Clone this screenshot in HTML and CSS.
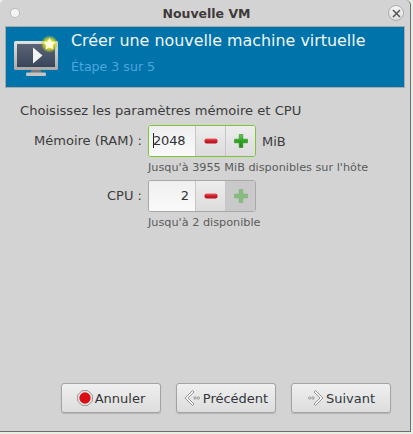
FILE: index.html
```html
<!DOCTYPE html>
<html lang="fr">
<head>
<meta charset="utf-8">
<title>Nouvelle VM</title>
<link rel="stylesheet" href="styles.css">
</head>
<body>
<svg class="defs" width="0" height="0">
  <defs>
    <radialGradient id="glow"><stop offset="0.35" stop-color="#f6f53a"/><stop offset="0.7" stop-color="#c8d32a" stop-opacity=".7"/><stop offset="1" stop-color="#8ab040" stop-opacity="0"/></radialGradient>
    <linearGradient id="scr" x1="0" y1="0" x2="0" y2="1"><stop offset="0" stop-color="#5a6476"/><stop offset="1" stop-color="#39465a"/></linearGradient>
    <linearGradient id="frm" x1="0" y1="0" x2="0" y2="1"><stop offset="0" stop-color="#e2e2e0"/><stop offset="1" stop-color="#a8a8a6"/></linearGradient>
    <linearGradient id="red" x1="0" y1="0" x2="0" y2="1"><stop offset="0" stop-color="#e8616a"/><stop offset=".45" stop-color="#d01f2c"/><stop offset="1" stop-color="#b3121d"/></linearGradient>
    <linearGradient id="grn" x1="0" y1="0" x2="0" y2="1"><stop offset="0" stop-color="#6cc95a"/><stop offset=".5" stop-color="#2fa521"/><stop offset="1" stop-color="#1f8a16"/></linearGradient>
  </defs>
</svg>
<div class="window">
  <header class="titlebar">
    <span class="menu-dot"></span>
    <span class="title">Nouvelle VM</span>
    <span class="close">
      <svg width="9" height="9" viewBox="0 0 9 9"><path d="M1 1l7 7M8 1L1 8" stroke="#555" stroke-width="1.500" fill="none"/></svg>
    </span>
  </header>
  <section class="banner">
    <svg class="vm-icon" width="48" height="44" viewBox="0 0 48 44">
      <rect x="0" y="7" width="44" height="29" rx="1.500" fill="url(#frm)"/>
      <rect x="3" y="10" width="38" height="23" fill="url(#scr)"/>
      <rect x="17" y="36" width="10" height="3" fill="#77797a"/>
      <rect x="12" y="38.500" width="20" height="3.500" rx="1" fill="#c4c4c2"/>
      <path d="M19 13.500 L28.500 21.500 L19 29.500Z" fill="#f4f4f4"/>
      <circle cx="35.500" cy="10" r="9" fill="url(#glow)"/>
      <path d="M35.500 3.800l1.900 4 4.300.5-3.200 2.900.9 4.300-3.900-2.200-3.900 2.200.9-4.300-3.200-2.900 4.300-.5z" fill="#fffbe0"/>
    </svg>
    <div class="banner-text">
      <div class="banner-title">Créer une nouvelle machine virtuelle</div>
      <div class="banner-step">Étape 3 sur 5</div>
    </div>
  </section>
  <main class="content">
    <p class="intro">Choisissez les paramètres mémoire et CPU</p>
    <div class="form">
      <label class="field-label">Mémoire (RAM) :</label>
      <div class="field">
        <div class="spin focused">
          <span class="spin-entry left"><i class="caret"></i>2048</span>
          <span class="spin-btn">
            <svg width="14" height="14" viewBox="0 0 14 14"><rect x=".5" y="4.500" width="13" height="5" rx="2" fill="url(#red)"/></svg>
          </span>
          <span class="spin-btn">
            <svg width="16" height="16" viewBox="0 0 16 16"><path d="M6.200 1.500h3.600v4.700h4.700v3.600H9.800v4.700H6.200V9.800H1.500V6.200h4.700z" fill="url(#grn)" stroke="#2a8f1e" stroke-width=".6" stroke-linejoin="round"/></svg>
          </span>
        </div>
        <span class="unit">MiB</span>
      </div>
      <div class="hint">Jusqu'à 3955 MiB disponibles sur l'hôte</div>
      <label class="field-label">CPU :</label>
      <div class="field">
        <div class="spin">
          <span class="spin-entry">2</span>
          <span class="spin-btn">
            <svg width="14" height="14" viewBox="0 0 14 14"><rect x=".5" y="4.500" width="13" height="5" rx="2" fill="url(#red)"/></svg>
          </span>
          <span class="spin-btn disabled">
            <svg width="16" height="16" viewBox="0 0 16 16"><path d="M6.200 1.500h3.600v4.700h4.700v3.600H9.800v4.700H6.200V9.800H1.500V6.200h4.700z" fill="#86bd7e" stroke="#78ad70" stroke-width=".6" stroke-linejoin="round"/></svg>
          </span>
        </div>
      </div>
      <div class="hint">Jusqu'à 2 disponible</div>
    </div>
  </main>
  <footer class="actions">
    <button class="btn" type="button">
      <svg width="16" height="16" viewBox="0 0 16 16"><path d="M5 .7h6L15.300 5v6L11 15.300H5L.7 11V5z" fill="#efefef" stroke="#8f8f8f"/><circle cx="8" cy="8" r="5.700" fill="#d90f14"/></svg>
      Annuler
    </button>
    <button class="btn" type="button">
      <svg width="17" height="18" viewBox="0 0 17 18"><path d="M8.500 1.500L1 9l7.500 7.500 1.500-1.500L4 9l6-6z" fill="#f4f4f4" stroke="#8c8c8c" stroke-width=".9" stroke-linejoin="round"/><circle cx="11" cy="9" r="1.200" fill="none" stroke="#8c8c8c" stroke-width=".8"/><circle cx="14.300" cy="9" r="1.200" fill="none" stroke="#8c8c8c" stroke-width=".8"/></svg>
      Précédent
    </button>
    <button class="btn" type="button">
      <svg width="17" height="18" viewBox="0 0 17 18"><path d="M8.500 1.500L16 9l-7.500 7.500L7 15l6-6-6-6z" fill="#f4f4f4" stroke="#8c8c8c" stroke-width=".9" stroke-linejoin="round"/><circle cx="6" cy="9" r="1.200" fill="none" stroke="#8c8c8c" stroke-width=".8"/><circle cx="2.700" cy="9" r="1.200" fill="none" stroke="#8c8c8c" stroke-width=".8"/></svg>
      Suivant
    </button>
  </footer>
</div>
</body>
</html>
```

FILE: styles.css
```css
* { box-sizing: border-box; }
html, body { margin: 0; padding: 0; height: 100%; background: #e9eee4; overflow: hidden; }
body { font-family: "DejaVu Sans", sans-serif; font-size: 13px; color: #3c3c3c; }
.defs { display: block; height: 0; }

.window {
  width: 411px;
  height: 432px;
  background: #d3d3d3;
  border-right: 1px solid #6d6d6d;
  border-bottom: 1px solid #6d6d6d;
  border-top-right-radius: 5px;
  border-top-left-radius: 5px;
  display: flex;
  flex-direction: column;
}

.titlebar {
  height: 26px;
  flex: none;
  display: flex;
  align-items: center;
  justify-content: space-between;
  padding: 0 6px 0 11px;
}
.title { font-weight: bold; font-size: 12.500px; color: #3f3a3a; margin-left: 6px; }
.menu-dot {
  width: 8px; height: 8px; border-radius: 50%;
  background: #f4f4f4;
  box-shadow: 0 0 0 1px #bdbdbd;
}
.close {
  width: 16px; height: 16px; border-radius: 50%;
  background: linear-gradient(#f6f6f6, #dcdcdc);
  border: 1px solid #aeaeae;
  display: flex; align-items: center; justify-content: center;
}

.banner {
  flex: none;
  margin: 0 5px;
  height: 62px;
  background: #0073ab;
  border: 1px solid #a9a9a9;
  display: flex;
  align-items: flex-start;
  padding-left: 8px;
  gap: 9px;
}
.vm-icon { margin-top: 7px; flex: none; }
.banner-text { padding-top: 3px; }
.banner-title { font-size: 15.900px; line-height: 22px; color: #f2f6f8; white-space: nowrap; }
.banner-step { font-size: 12.600px; line-height: 17px; margin-top: 6px; color: #4da6dc; }

.content { flex: 1; padding: 15px 20px 0; }
.intro { margin: 0; font-size: 13.100px; line-height: 16px; color: #3c3c3c; white-space: nowrap; }

.form {
  margin-top: 6px;
  display: grid;
  grid-template-columns: 122px auto;
  column-gap: 6px;
  justify-content: start;
}
.field-label { text-align: right; line-height: 32px; white-space: nowrap; }
.field { display: flex; align-items: center; gap: 6px; }
.hint { grid-column: 2; font-size: 11.250px; line-height: 14px; color: #5b5b5b; margin: 4px 0 5px; white-space: nowrap; }

.spin {
  width: 108px; height: 32px;
  display: flex;
  border: 1px solid #a8a8a8;
  border-radius: 3px;
  overflow: hidden;
  background: #eee;
}
.spin.focused { border-color: #7ec535; }
.spin-entry {
  width: 46px;
  flex: none;
  background: linear-gradient(#efefef, #fafafa);
  text-align: right;
  padding: 0 6px;
  line-height: 30px;
  color: #2e3436;
}
.spin-entry.left { text-align: left; padding-left: 4px; letter-spacing: -0.2px; }
.caret { display: inline-block; width: 1px; height: 15px; background: #222; margin-right: -1px; vertical-align: -3px; }
.spin-btn {
  flex: 1;
  background: linear-gradient(#ededed, #dcdcdc);
  border-left: 1px solid #c6c6c6;
  display: flex; align-items: center; justify-content: center;
}
.spin-btn.disabled { background: #c9c9c9; }

.unit { color: #3c3c3c; }

.actions {
  flex: none;
  display: flex;
  gap: 15px;
  padding: 0 19px 18px 61px;
}
.btn {
  width: 100px; height: 30px;
  display: flex; align-items: center; justify-content: center; gap: 2px;
  padding: 0;
  font: 13px "DejaVu Sans", sans-serif;
  color: #33363a;
  background: linear-gradient(#efefef, #dddddd);
  border: 1px solid #a3a3a3;
  border-radius: 3px;
  box-shadow: 0 1px 1px #b5b5b5;
}
```
